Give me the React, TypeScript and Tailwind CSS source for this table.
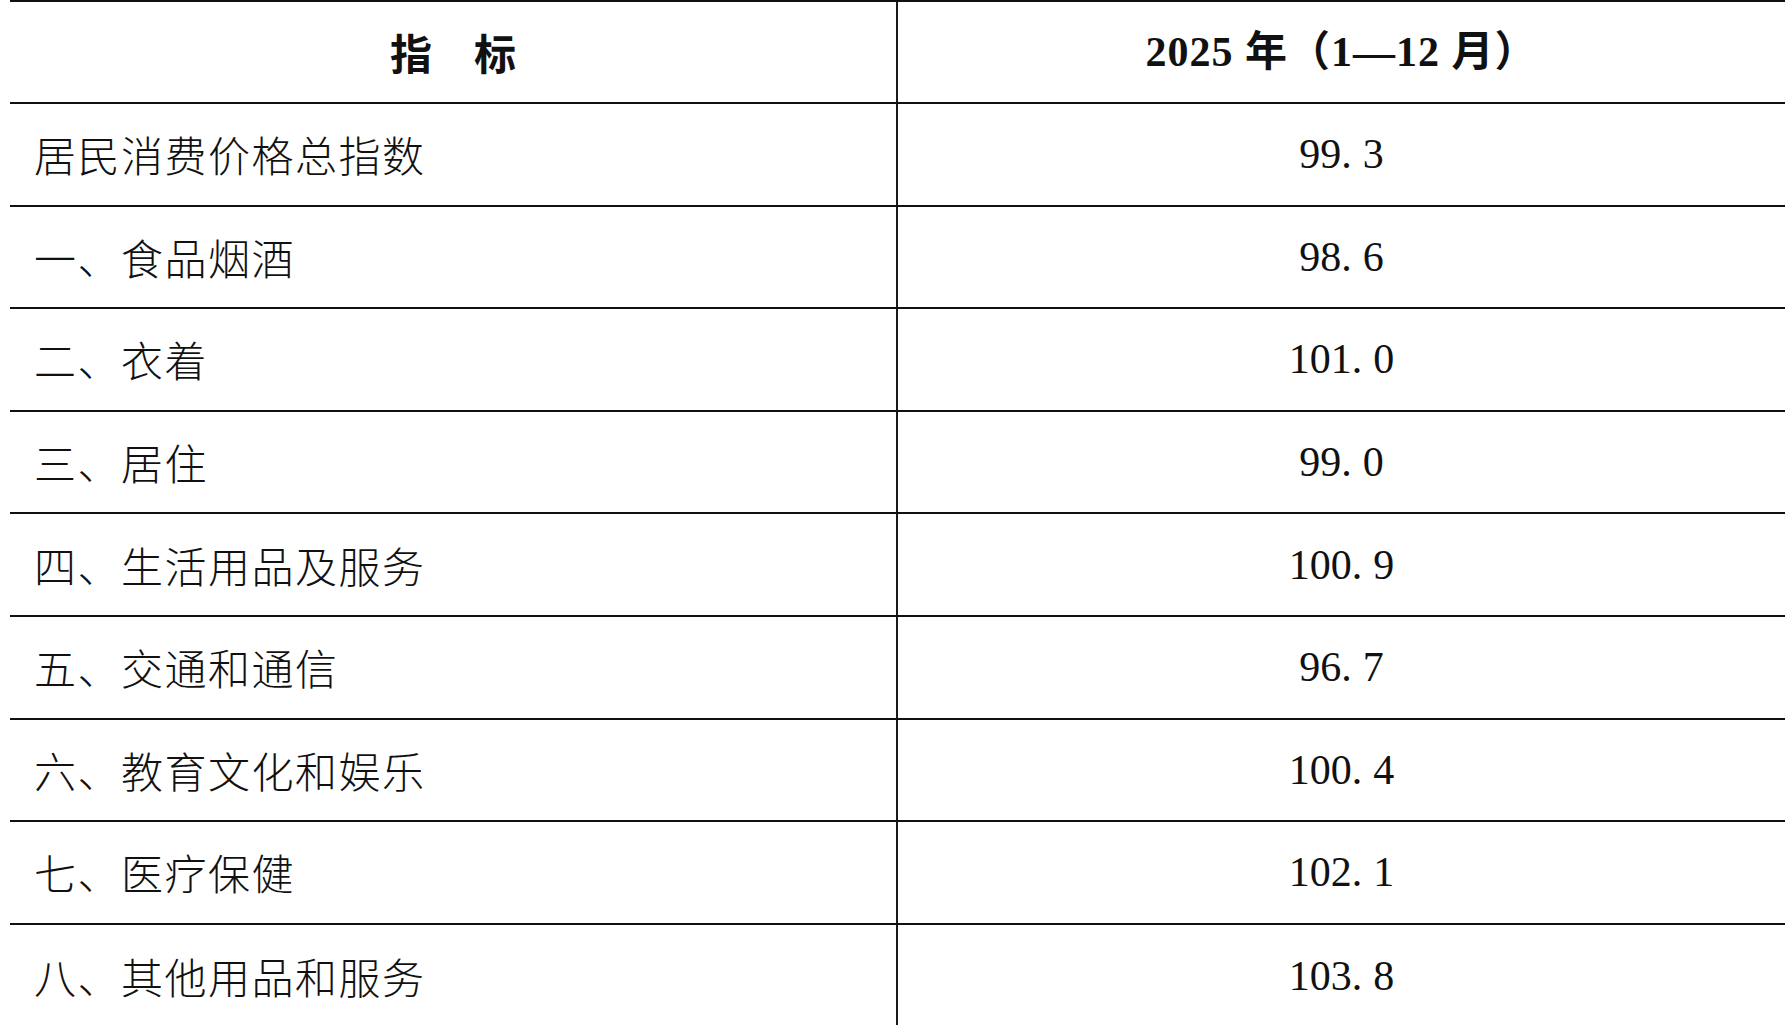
import React from 'react';

interface Row {
  label: string;
  value: string;
}

const rows: Row[] = [
  { label: '居民消费价格总指数', value: '99.3' },
  { label: '一、食品烟酒', value: '98.6' },
  { label: '二、衣着', value: '101.0' },
  { label: '三、居住', value: '99.0' },
  { label: '四、生活用品及服务', value: '100.9' },
  { label: '五、交通和通信', value: '96.7' },
  { label: '六、教育文化和娱乐', value: '100.4' },
  { label: '七、医疗保健', value: '102.1' },
  { label: '八、其他用品和服务', value: '103.8' },
];

const cjk = "font-['Noto_Sans_CJK_SC',sans-serif]";
const num = "font-['Liberation_Serif','Noto_Sans_CJK_SC',serif]";

// the source prints a wide gap after the decimal point
const Value: React.FC<{ value: string }> = ({ value }) => {
  const [whole, frac] = value.split('.');
  return (
    <span className={`${num} text-[42px] leading-none text-[#111]`}>
      {whole}
      <span className="mr-[11px]">.</span>
      {frac}
    </span>
  );
};

const App: React.FC = () => {
  return (
    <div className="h-screen w-full overflow-hidden bg-white">
      <div className="ml-[10px] w-[1775px] border-t-2 border-[#111]">
        <div className="flex h-[102px] border-b-2 border-[#111]">
          <div className={`${cjk} flex w-[888px] items-center justify-center border-r-2 border-[#1a1a1a] text-[42px] font-bold leading-none text-[#111]`}>
            指　标
          </div>
          <div className={`${num} flex flex-1 items-center justify-center text-[42px] font-bold leading-none tracking-[1px] text-[#111]`}>
            2025 年（1—12 月）
          </div>
        </div>
        {rows.map((row, i) => (
          <div
            key={row.label}
            className={`flex h-[102.6px] ${i < rows.length - 1 ? 'border-b-2' : ''} border-[#111]`}
          >
            <div className={`${cjk} flex w-[888px] items-center border-r-2 border-[#1a1a1a] pl-[24px] text-[42px] font-light leading-none tracking-[1.5px] text-[#111]`}>
              {row.label}
            </div>
            <div className="flex flex-1 items-center justify-center">
              <Value value={row.value} />
            </div>
          </div>
        ))}
      </div>
    </div>
  );
};

export default App;
